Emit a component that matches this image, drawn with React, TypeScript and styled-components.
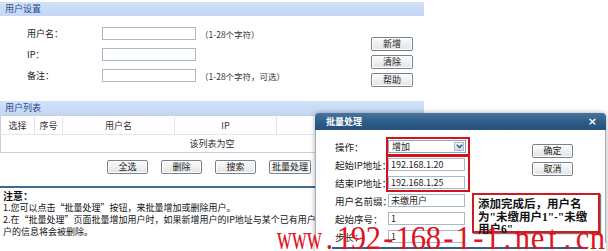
import React from "react";
import styled, { createGlobalStyle } from "styled-components";

const Global = createGlobalStyle`
  html, body { margin: 0; padding: 0; background: #fff; }
  body { font-family: "Noto Sans CJK SC", "Noto Sans", sans-serif; }
`;

const Stage = styled.div`
  position: relative;
  width: 608px;
  height: 251px;
  overflow: hidden;
  background: #fff;
  font-family: "Noto Sans CJK SC", "Noto Sans", sans-serif;
  font-size: 9px;
  color: #222;
`;

const Main = styled.div`
  width: 424px;
  padding-top: 2px;
`;

const SectionBar = styled.div`
  height: 14px;
  line-height: 14px;
  padding-left: 5px;
  background: linear-gradient(#d2e1f9, #c3d6f4);
  color: #1f4e8a;
  font-size: 9px;
`;

const FormArea = styled.div`
  display: flex;
  height: 85px;
`;

const FormGrid = styled.div`
  display: grid;
  grid-template-columns: 75px 94px auto;
  grid-auto-rows: 13px;
  row-gap: 8px;
  align-items: center;
  padding: 11px 0 0 27px;
`;

const Label = styled.span`
  color: #222;
  font-size: 9px;
  white-space: nowrap;
`;

const TextInput = styled.div<{ $w?: number }>`
  box-sizing: border-box;
  width: ${(p) => p.$w ?? 94}px;
  height: 13px;
  border: 1px solid #a9b7c8;
  background: #fff;
  font-size: 9px;
  line-height: 11px;
  padding-left: 2px;
  color: #222;
  white-space: nowrap;
`;

const Hint = styled.span`
  margin-left: 4px;
  color: #333;
  font-size: 8.5px;
  white-space: nowrap;
`;

const ButtonCol = styled.div<{ $top: number; $right: number }>`
  margin-left: auto;
  display: flex;
  flex-direction: column;
  gap: 4px;
  padding: ${(p) => p.$top}px ${(p) => p.$right}px 0 0;
`;

const Button = styled.button<{ $w?: number }>`
  box-sizing: border-box;
  width: ${(p) => p.$w ?? 42}px;
  height: 14px;
  padding: 0;
  border: 1px solid #76838f;
  border-radius: 2px;
  background: linear-gradient(#fcfcfc, #e3e3e3);
  box-shadow: inset 0 0 0 1px #fff;
  font-family: "Noto Sans CJK SC", sans-serif;
  font-size: 9px;
  line-height: 12px;
  color: #222;
`;

const Table = styled.table`
  width: 100%;
  border-collapse: collapse;
  border: 1px solid #c6d1df;
  font-size: 9px;
  color: #333;
`;

const Th = styled.th<{ $w?: number }>`
  height: 18px;
  padding: 0;
  font-weight: normal;
  text-align: center;
  border-right: 1px solid #dfe5ee;
  border-bottom: 1px solid #e3e8f0;
  ${(p) => (p.$w ? `width: ${p.$w}px;` : "")}
`;

const Td = styled.td`
  height: 17px;
  padding: 0;
  text-align: center;
`;

const ActionRow = styled.div`
  display: flex;
  gap: 13px;
  padding-left: 107px;
  margin-top: 7px;
`;

const Divider = styled.div`
  margin-top: 12px;
  border-top: 2px solid #3f6a98;
`;

const Notes = styled.div`
  padding: 2px 0 0 3px;
  line-height: 12px;
  font-size: 9px;
  color: #111;
`;

const NoteTitle = styled.div`
  font-weight: bold;
  font-size: 10px;
`;

const NoteLine = styled.div`
  white-space: nowrap;
`;

const Dialog = styled.div`
  position: absolute;
  left: 315px;
  top: 113px;
  width: 291px;
  height: 150px;
  z-index: 2;
  background: #fff;
  border-radius: 4px 4px 0 0;
  box-shadow: 0 0 5px rgba(0, 0, 0, 0.35);
`;

const DialogTitle = styled.div`
  display: flex;
  align-items: center;
  justify-content: space-between;
  height: 17px;
  padding: 0 9px 0 11px;
  border-radius: 4px 4px 0 0;
  background: linear-gradient(#46749f, #2c5a86 60%, #274f79);
  color: #fff;
  font-size: 9px;
  font-weight: bold;
`;

const Close = styled.span`
  font-family: "DejaVu Sans", sans-serif;
  font-size: 11px;
  font-weight: bold;
`;

const DialogBody = styled.div`
  display: flex;
  border-left: 1px solid #a5b0bc;
  border-right: 1px solid #a5b0bc;
`;

const DialogForm = styled.div`
  display: grid;
  grid-template-columns: 53px 78px;
  grid-auto-rows: 13px;
  row-gap: 5px;
  align-items: center;
  padding: 10px 0 0 19px;
`;

const DialogLabel = styled.span<{ $row: number }>`
  grid-column: 1;
  grid-row: ${(p) => p.$row};
  font-size: 9.5px;
  color: #222;
  white-space: nowrap;
`;

const DialogField = styled.div<{ $row: number }>`
  grid-column: 2;
  grid-row: ${(p) => p.$row};
  display: flex;
`;

const Highlight = styled.div<{ $row: number; $span: number }>`
  grid-column: 2;
  grid-row: ${(p) => p.$row} / span ${(p) => p.$span};
  align-self: stretch;
  margin: -3px -4px -3px -2px;
  border: 2px solid #d3121c;
  pointer-events: none;
  z-index: 1;
`;

const Select = styled.div`
  box-sizing: border-box;
  display: flex;
  align-items: center;
  width: 78px;
  height: 13px;
  border: 1px solid #8ea4bf;
  background: #fff;
  font-size: 9px;
  padding-left: 3px;
`;

const SelectArrow = styled.span`
  box-sizing: border-box;
  display: flex;
  align-items: center;
  justify-content: center;
  margin-left: auto;
  margin-right: 1px;
  width: 10px;
  height: 9px;
  border: 1px solid #a9bbd3;
  background: linear-gradient(#f2f6fb, #ccd9ea);
`;

const DialogButtons = styled.div`
  margin-left: auto;
  display: flex;
  flex-direction: column;
  gap: 4px;
  padding: 14px 32px 0 0;
`;

const DialogRule = styled.div`
  margin: 4px 18px 0 17px;
  border-top: 2px solid #2f5f8f;
`;

const Callout = styled.div`
  position: absolute;
  left: 157px;
  top: 80px;
  box-sizing: border-box;
  width: 128px;
  height: 40px;
  padding: 3px 3px 0 4px;
  border: 2px solid #cf1a22;
  background: #fff;
  box-shadow: 1px 1px 1px #777;
  font-family: "Liberation Serif", "Noto Sans CJK SC", serif;
  font-size: 11.5px;
  font-weight: bold;
  line-height: 12.5px;
  color: #111;
  white-space: nowrap;
  z-index: 3;
`;

const Watermark = styled.div`
  position: absolute;
  left: 277px;
  top: 221px;
  z-index: 5;
  display: flex;
  font-family: "Liberation Serif", serif;
  font-size: 34px;
  line-height: 34px;
  color: #e0141e;
  white-space: nowrap;
  pointer-events: none;
`;

const WmChar = styled.span<{ $narrow?: boolean }>`
  display: inline-flex;
  justify-content: center;
  width: 14.9px;
  transform: scaleX(${(p) => (p.$narrow ? 0.62 : 0.9)});
`;

const WATERMARK = "www.192-168-1-1.net.cn";

export default function App() {
  return (
    <Stage>
      <Global />
      <Main>
        <SectionBar>用户设置</SectionBar>
        <FormArea>
          <FormGrid>
            <Label>用户名：</Label>
            <TextInput />
            <Hint>（1-28个字符）</Hint>
            <Label>IP：</Label>
            <TextInput />
            <span />
            <Label>备注：</Label>
            <TextInput />
            <Hint>（1-28个字符，可选）</Hint>
          </FormGrid>
          <ButtonCol $top={21} $right={11}>
            <Button>新增</Button>
            <Button>清除</Button>
            <Button>帮助</Button>
          </ButtonCol>
        </FormArea>
        <SectionBar>用户列表</SectionBar>
        <Table>
          <thead>
            <tr>
              <Th $w={33}>选择</Th>
              <Th $w={27}>序号</Th>
              <Th $w={111}>用户名</Th>
              <Th $w={101}>IP</Th>
              <Th>备注</Th>
            </tr>
          </thead>
          <tbody>
            <tr>
              <Td colSpan={5}>该列表为空</Td>
            </tr>
          </tbody>
        </Table>
        <ActionRow>
          <Button $w={41}>全选</Button>
          <Button $w={41}>删除</Button>
          <Button $w={41}>搜索</Button>
          <Button $w={42}>批量处理</Button>
        </ActionRow>
        <Divider />
        <Notes>
          <NoteTitle>注意：</NoteTitle>
          <NoteLine>1.您可以点击“批量处理”按钮，来批量增加或删除用户。</NoteLine>
          <NoteLine>
            2.在“批量处理”页面批量增加用户时，如果新增用户的IP地址与某个已有用户的IP地址相同，则已有用
          </NoteLine>
          <NoteLine>户的信息将会被删除。</NoteLine>
        </Notes>
      </Main>

      <Dialog>
        <DialogTitle>
          <span>批量处理</span>
          <Close>×</Close>
        </DialogTitle>
        <DialogBody>
          <DialogForm>
            <DialogLabel $row={1}>操作：</DialogLabel>
            <DialogField $row={1}>
              <Select>
                增加
                <SelectArrow>
                  <svg width="7" height="5" viewBox="0 0 7 5">
                    <path d="M0.8 0.8 L3.5 3.6 L6.2 0.8" fill="none" stroke="#2a4f80" strokeWidth="1.4" />
                  </svg>
                </SelectArrow>
              </Select>
            </DialogField>
            <Highlight $row={1} $span={1} />
            <DialogLabel $row={2}>起始IP地址：</DialogLabel>
            <DialogField $row={2}>
              <TextInput $w={77}>192.168.1.20</TextInput>
            </DialogField>
            <DialogLabel $row={3}>结束IP地址：</DialogLabel>
            <DialogField $row={3}>
              <TextInput $w={77}>192.168.1.25</TextInput>
            </DialogField>
            <Highlight $row={2} $span={2} />
            <DialogLabel $row={4}>用户名前缀：</DialogLabel>
            <DialogField $row={4}>
              <TextInput $w={77}>未缴用户</TextInput>
            </DialogField>
            <DialogLabel $row={5}>起始序号：</DialogLabel>
            <DialogField $row={5}>
              <TextInput $w={77}>1</TextInput>
            </DialogField>
            <DialogLabel $row={6}>步长：</DialogLabel>
            <DialogField $row={6}>
              <TextInput $w={77}>1</TextInput>
            </DialogField>
          </DialogForm>
          <DialogButtons>
            <Button $w={41}>确定</Button>
            <Button $w={41}>取消</Button>
          </DialogButtons>
        </DialogBody>
        <DialogRule />
        <Callout>
          添加完成后，用户名
          <br />
          为"未缴用户1"-"未缴
          <br />
          用户6"
        </Callout>
      </Dialog>

      <Watermark>
        {WATERMARK.split("").map((c, i) => (
          <WmChar key={i} $narrow={c === "w"}>
            {c}
          </WmChar>
        ))}
      </Watermark>
    </Stage>
  );
}
